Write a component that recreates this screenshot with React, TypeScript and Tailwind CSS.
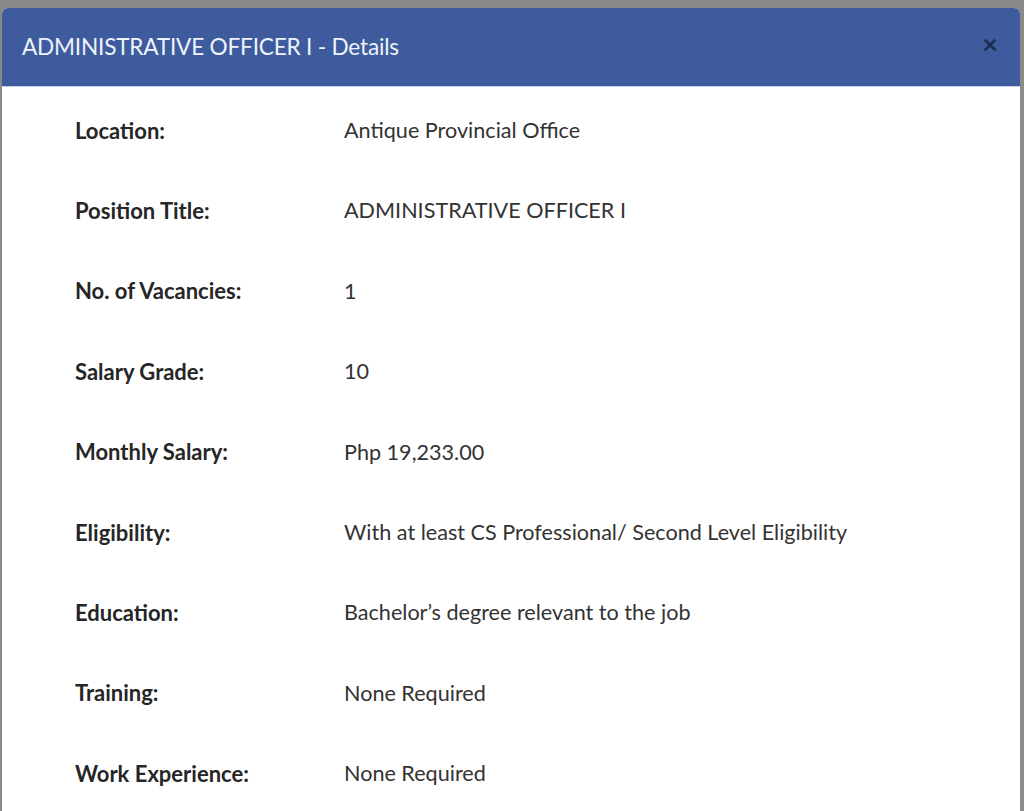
import React from "react";

const rows: [string, string][] = [
  ["Location:", "Antique Provincial Office"],
  ["Position Title:", "ADMINISTRATIVE OFFICER I"],
  ["No. of Vacancies:", "1"],
  ["Salary Grade:", "10"],
  ["Monthly Salary:", "Php 19,233.00"],
  ["Eligibility:", "With at least CS Professional/ Second Level Eligibility"],
  ["Education:", "Bachelor\u2019s degree relevant to the job"],
  ["Training:", "None Required"],
  ["Work Experience:", "None Required"],
];

export default function App() {
  return (
    <div
      className="w-[1024px] h-[811px] overflow-hidden bg-[#8a8a8a] pt-[8px] pl-[2px] pr-[4px]"
      style={{ fontFamily: "Lato, 'Open Sans', sans-serif" }}
    >
      <div className="h-full bg-white rounded-t-[6px] overflow-hidden">
        <div className="h-[79px] bg-[#3d5b9d] flex items-center justify-between pl-[20px] pr-[22px] border-b border-[#c9d3e6]">
          <h1 className="text-[22.6px] text-[#eef2fb] font-normal tracking-[-0.2px]">
            ADMINISTRATIVE OFFICER I - Details
          </h1>
          <span className="text-[27px] font-bold text-[#1e2b4e] leading-none -mt-[8px]">×</span>
        </div>
        <div className="pt-[3px] pl-[73px]">
          {rows.map(([k, v]) => (
            <div key={k} className="flex items-center h-[80.4px]">
              <div className="w-[269px] text-[22px] font-bold text-[#262626]">{k}</div>
              <div className="text-[21.6px] text-[#333333]">{v}</div>
            </div>
          ))}
        </div>
      </div>
    </div>
  );
}
